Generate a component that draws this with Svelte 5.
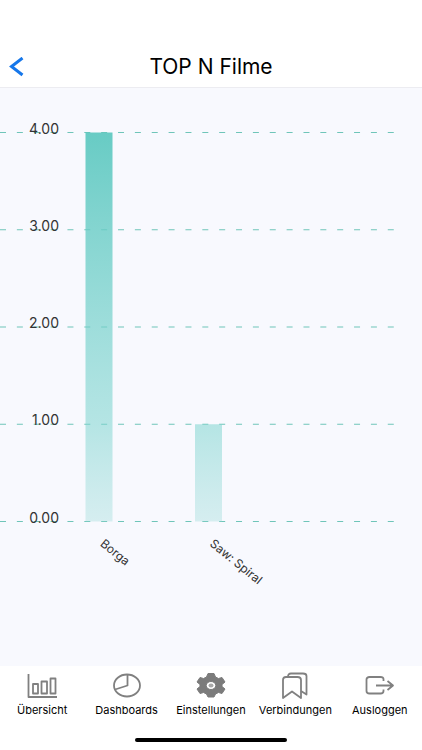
<script>
	const bars = [
		{ name: 'Borga', value: 4 },
		{ name: 'Saw: Spiral', value: 1 }
	];

	const ticks = [4, 3, 2, 1, 0];

	const baseline = 433.5;
	const barWidth = 27;

	function yFor(value) {
		return baseline - (value * 389) / 4;
	}

	function xFor(index) {
		return 85.5 + index * 109.5;
	}

	let tabs = [
		{ id: 'overview', label: 'Übersicht' },
		{ id: 'dashboards', label: 'Dashboards' },
		{ id: 'settings', label: 'Einstellungen' },
		{ id: 'connections', label: 'Verbindungen' },
		{ id: 'logout', label: 'Ausloggen' }
	];
</script>

<div class="page">
	<header>
		<button class="back" aria-label="Zurück">
			<svg width="16" height="20" viewBox="0 0 16 20">
				<path d="M14.500 1 L3.500 9.500 L14.500 18" />
			</svg>
		</button>
		<h1>TOP N Filme</h1>
	</header>

	<main>
		<svg class="chart" viewBox="0 0 422 540" role="img" aria-label="TOP N Filme">
			<defs>
				<linearGradient id="fill" gradientUnits="userSpaceOnUse" x1="0" y1="45" x2="0" y2="434">
					<stop offset="0" stop-color="#5dc8c0" stop-opacity="0.93" />
					<stop offset="0.75" stop-color="#80d5d0" stop-opacity="0.56" />
					<stop offset="1" stop-color="#9ddbd9" stop-opacity="0.38" />
				</linearGradient>
			</defs>

			{#each ticks as tick}
				<line class="grid" x1="0" x2="394" y1={yFor(tick)} y2={yFor(tick)} />
			{/each}

			{#each bars as bar, i}
				<rect
					x={xFor(i)}
					y={yFor(bar.value)}
					width={barWidth}
					height={baseline - yFor(bar.value)}
					fill="url(#fill)"
				/>
				<text class="name" transform="translate({xFor(i) + 16} {baseline + 21}) rotate(39)">
					{bar.name}
				</text>
			{/each}

			{#each ticks as tick}
				<text class="tick" x="59" y={yFor(tick) + 1}>{tick.toFixed(2)}</text>
			{/each}
		</svg>
	</main>

	<nav>
		{#each tabs as tab}
			<button class="tab">
				<svg class="icon" width="32" height="28" viewBox="0 0 32 28">
					{#if tab.id === 'overview'}
						<path d="M2.500 2 V25 H31" />
						<path d="M7 12 H12 V21.500 H7 Z M15.500 9.500 H21 V21.500 H15.500 Z M24.500 6.500 H29.500 V21.500 H24.500 Z" />
					{:else if tab.id === 'dashboards'}
						<ellipse cx="16" cy="13.500" rx="13" ry="11" />
						<path d="M16.500 2.500 V13.500 L4 17.500" />
					{:else if tab.id === 'settings'}
						<path
							class="solid"
							fill-rule="evenodd"
							d="M13 1.500 H19 L20.500 5 L23.500 6.500 L27 5.500 L30 10 L27 12.500 V14.500 L30 17 L27 21.500 L23.500 20.500 L20.500 22 L19 25 H13 L11.500 22 L8.500 20.500 L5 21.500 L2 17 L5 14.500 V12.500 L2 10 L5 5.500 L8.500 6.500 L11.500 5 Z M16 9.500 A4.800 4 0 1 0 16 17.500 A4.800 4 0 1 0 16 9.500 Z"
						/>
						<ellipse class="hub" cx="16" cy="13.500" rx="2.500" ry="2" />
					{:else if tab.id === 'connections'}
						<path d="M4 8 Q4 5 7 5 H18.500 Q22 5 22 8 V26 L13 19.500 L4 26 Z" />
						<path d="M9 5 Q9 1.500 12 1.500 H24 Q27.500 1.500 27.500 4 V22.500 L22 19" />
					{:else}
						<path d="M19.500 9 V7 Q19.500 5 16.500 5 H5.500 Q2.500 5 2.500 7.500 V19 Q2.500 21.500 5.500 21.500 H16.500 Q19.500 21.500 19.500 19 V17.500" />
						<path d="M12 13.500 H28.500 M23.500 9 L29 13.500 L23.500 18" />
					{/if}
				</svg>
				<span>{tab.label}</span>
			</button>
		{/each}
	</nav>

	<div class="home-bar"></div>
</div>

<style>
	:global(body) {
		margin: 0;
		background: #fff;
	}

	.page {
		display: flex;
		flex-direction: column;
		min-height: 100vh;
		background: #fff;
		color: #000;
		font-family: Inter, 'Liberation Sans', sans-serif;
	}

	header {
		display: grid;
		grid-template-columns: 40px 1fr 40px;
		align-items: center;
		padding-top: 46px;
		height: 41px;
		border-bottom: 1px solid #ececf1;
	}

	h1 {
		margin: 0;
		font-size: 21px;
		font-weight: 400;
		line-height: 24px;
		text-align: center;
	}

	button {
		border: none;
		background: none;
		padding: 0;
		font-family: inherit;
		color: inherit;
		cursor: pointer;
	}

	.back {
		display: flex;
		padding-left: 8px;
	}

	.back path {
		fill: none;
		stroke: #1677ea;
		stroke-width: 3;
	}

	main {
		flex: 1;
		background: #f8f9fe;
	}

	.chart {
		display: block;
		width: 100%;
	}

	.grid {
		stroke: #6fc5b9;
		stroke-width: 1;
		stroke-dasharray: 6 10.86;
	}

	.tick {
		font-size: 14px;
		fill: #333;
		text-anchor: end;
	}

	.name {
		font-size: 12px;
		fill: #333;
		dominant-baseline: middle;
	}

	nav {
		display: grid;
		grid-template-columns: repeat(5, 1fr);
		padding: 6px 0 20px;
	}

	.tab {
		display: flex;
		flex-direction: column;
		align-items: center;
		gap: 2px;
		font-size: 11px;
		line-height: 16px;
	}

	.icon path,
	.icon ellipse {
		fill: none;
		stroke: #808080;
		stroke-width: 1.8;
		stroke-linejoin: round;
	}

	.icon .solid {
		fill: #7b7b7b;
		stroke: #7b7b7b;
		stroke-width: 1;
	}

	.icon .hub {
		fill: #a8a8a8;
		stroke: none;
	}

	.home-bar {
		align-self: center;
		width: 36%;
		height: 4px;
		margin-bottom: 8px;
		border-radius: 2px;
		background: #000;
	}
</style>
